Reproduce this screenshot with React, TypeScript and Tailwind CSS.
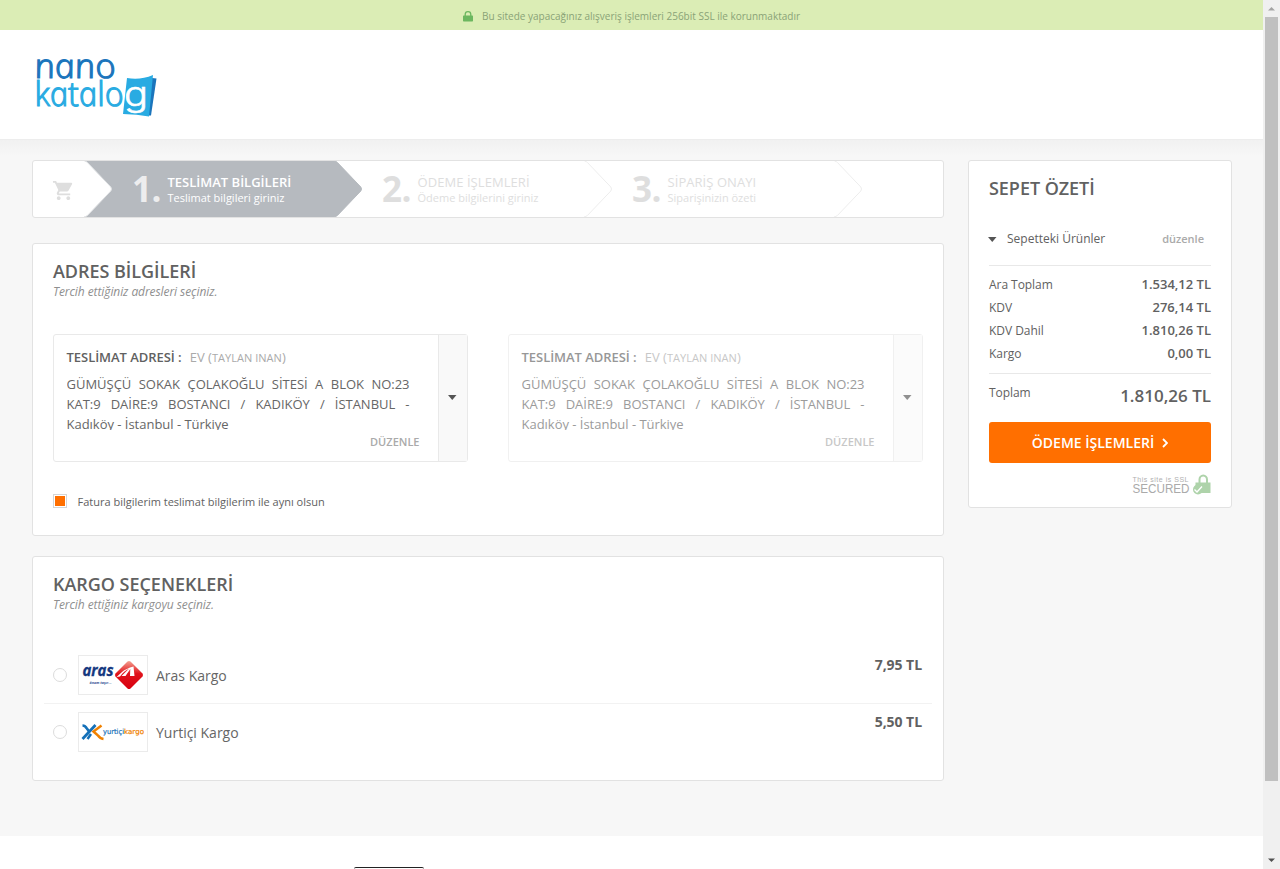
import React from "react";

function Chevron({ fill, stroke, back }: { fill: string; stroke: string; back: string }) {
  return (
    <svg width="28" height="56" viewBox="0 0 28 56" className="shrink-0">
      <rect width="28" height="56" fill={back} />
      <path d="M0 0H0.500Q2.500 0.400 3.500 1.600L26.800 26Q28.200 28 26.800 30L3.500 54.400Q2 55.600 0 56H0Z" fill={fill} />
      <path d="M0.500 0Q2.500 0.400 3.500 1.600L26.800 26Q28.200 28 26.800 30L3.500 54.400Q2 55.600 0 56" fill="none" stroke={stroke} />
    </svg>
  );
}

function Step({ no, title, text, active }: { no: string; title: string; text: string; active?: boolean }) {
  return (
    <div className={"flex h-[56px] w-[222px] shrink-0 whitespace-nowrap pl-5 " + (active ? "bg-[#b6babf] text-white" : "bg-white text-[#dedede]")}>
      <div className={"w-[35px] text-[35px] font-bold leading-[55px] tracking-[-0.5px] " + (active ? "text-[#ededee]" : "")}>{no}</div>
      <div className="pl-[0.5px] pt-[12px]">
        <div className={"text-[13px] leading-[18px] " + (active ? "font-semibold" : "tracking-[0.06px]")}>{title}</div>
        <div className="text-[11px] leading-[13px]">{text}</div>
      </div>
    </div>
  );
}

function SectionTitle({ title, sub }: { title: string; sub: string }) {
  return (
    <div className="whitespace-nowrap">
      <h2 className="text-[18px] font-semibold leading-[20px] tracking-[-0.03px] text-[#616161]">{title}</h2>
      <p className="mt-[2px] text-[12px] italic leading-[18px] tracking-[-0.08px] text-[#8f8f8f]">{sub}</p>
    </div>
  );
}

function Caret() {
  return (
    <svg width="9" height="5" viewBox="0 0 9 5" className="shrink-0">
      <path d="M0 0H8.500L4.250 5Z" fill="#555" />
    </svg>
  );
}

function AddressCard({ faded }: { faded?: boolean }) {
  return (
    <div className={"flex h-[128px] w-[415px] rounded-[3px] border border-[#e9e9e9] " + (faded ? "opacity-65" : "")}>
      <div className="flex flex-1 flex-col pl-[12.5px] pt-[12px]">
        <div className="whitespace-nowrap text-[13px] leading-5 tracking-[-0.04px]">
          <span className="font-semibold text-[#616161]">TESLİMAT ADRESİ :</span>
          <span className="ml-2 tracking-[0.03px] text-[#aaa]">EV (<span className="text-[11px]">TAYLAN INAN</span>)</span>
        </div>
        <div className="mt-[6px] h-[56px] w-[343px] overflow-hidden text-justify text-[13px] leading-5 tracking-[-0.02px] text-[#666]">
          GÜMÜŞÇÜ SOKAK ÇOLAKOĞLU SİTESİ A BLOK NO:23 KAT:9 DAİRE:9 BOSTANCI / KADIKÖY / İSTANBUL - Kadıköy - İstanbul - Türkiye
        </div>
        <div className="mt-[4px] pr-[18.5px] text-right text-[11px] font-semibold leading-[16px] text-[#aaa]">DÜZENLE</div>
      </div>
      <div className="flex w-[29px] items-center justify-center border-l border-[#e9e9e9] bg-[#f9f9f9] pb-[2px] pr-px">
        <Caret />
      </div>
    </div>
  );
}

function ArasLogo() {
  return (
    <svg width="68" height="38" viewBox="0 0 68 38" className="[font-family:'Open_Sans',sans-serif]">
      <defs>
        <linearGradient id="aras" x1="0" y1="0" x2="0" y2="1">
          <stop offset="0" stopColor="#f4a090" />
          <stop offset="0.450" stopColor="#e0141c" />
          <stop offset="1" stopColor="#d8000f" />
        </linearGradient>
      </defs>
      <text x="3.500" y="20" fontSize="15.500" fontWeight="bold" fontStyle="italic" fill="#15387f" stroke="#15387f" strokeWidth="0.300" textLength="31" lengthAdjust="spacingAndGlyphs">aras</text>
      <text x="10.500" y="27.500" fontSize="4.200" fontWeight="bold" fontStyle="italic" fill="#3c5a98" textLength="22" lengthAdjust="spacingAndGlyphs">önem taşır...</text>
      <path d="M48.500 5.500Q50 4.500 51.500 5.500L63.500 17.500Q64.500 19 63.500 20.500L51.500 32.500Q50 33.500 48.500 32.500L36.500 20.500Q35.500 19 36.500 17.500Z" fill="url(#aras)" />
      <path d="M37.500 21L43 16Q47 12.500 54.500 10.500L55.500 20H51L51.300 13L46.500 20H42.500L50 12.800Q45 15 41 20.500Z" fill="#fff" />
    </svg>
  );
}

function YurticiLogo() {
  return (
    <svg width="68" height="38" viewBox="0 0 68 38" className="[font-family:'DejaVu_Sans',sans-serif]">
      <path d="M3.500 12.500Q6 12.500 7.500 15L10.500 19" fill="none" stroke="#1470b8" strokeWidth="2.600" />
      <path d="M3.500 26L16.500 12" stroke="#1470b8" strokeWidth="2.800" />
      <path d="M8.500 26L12 21" stroke="#1470b8" strokeWidth="2.500" />
      <path d="M22.500 12.500L14.500 18.500L19 22.500Q21 25.500 24.500 26" fill="none" stroke="#f08100" strokeWidth="2.500" />
      <g strokeWidth="0.200">
        <text x="24" y="20.500" fontSize="7" fill="#1470b8" stroke="#1470b8" textLength="21" lengthAdjust="spacingAndGlyphs">yurtiçi</text>
        <text x="45" y="20.500" fontSize="7" fill="#f08100" stroke="#f08100" textLength="20" lengthAdjust="spacingAndGlyphs">kargo</text>
      </g>
    </svg>
  );
}

function CargoRow({ logo, name, price }: { logo: React.ReactNode; name: string; price: string }) {
  return (
    <div className="box-content flex h-[56px] items-center">
      <span className="ml-[9px] h-[14px] w-[14px] rounded-full border border-[#dcdcdc] bg-white" />
      <span className="ml-[11px] flex h-10 w-[70px] border border-[#ebebeb]">{logo}</span>
      <span className="ml-[8px] pt-[2px] text-[14px] leading-5 text-[#666]">{name}</span>
      <span className="ml-auto mr-[10px] pb-[20px] text-[14px] font-bold leading-4 tracking-[-0.05px] text-[#616161]">{price}</span>
    </div>
  );
}

function SumRow({ label, value }: { label: string; value: string }) {
  return (
    <div className="flex h-[23px] justify-between">
      <span className="text-[12px] leading-[24px] tracking-[-0.05px]">{label}</span>
      <span className="text-[13px] font-semibold leading-[23px]">{value}</span>
    </div>
  );
}

function NanoLogo() {
  return (
    <svg width="126" height="76" viewBox="0 0 126 76" className="overflow-visible [font-family:'Open_Sans',sans-serif]">
      <path d="M119 28L123.500 28.500L118 65.500L113 65.500Z" fill="#1b75bc" />
      <path d="M94 28Q107 30.500 120 25L116 66.500Q104 64 90 64Z" fill="#29abe2" />
      <g fontSize="34" fontStyle="italic" fontWeight="300" strokeWidth="1.100">
        <text transform="translate(3.500 27.500) skewX(12)" fill="#1b75bc" stroke="#1b75bc" textLength="81" lengthAdjust="spacingAndGlyphs">nano</text>
        <text transform="translate(3.500 55.500) skewX(12)" fill="#29abe2" stroke="#29abe2" textLength="89" lengthAdjust="spacingAndGlyphs">katalo</text>
      </g>
      <text x="91" y="55.500" fontSize="34" fontWeight="300" fill="#fff" stroke="#fff" strokeWidth="0.600" textLength="24" lengthAdjust="spacingAndGlyphs" className="[font-family:Inter,sans-serif]">g</text>
    </svg>
  );
}

export default function App() {
  return (
    <div className="flex h-[869px] w-[1280px] overflow-hidden bg-white [font-family:'Open_Sans','Liberation_Sans',sans-serif]">
      <div className="flex w-[1263px] flex-col">
        <div className="flex h-[30px] shrink-0 items-center justify-center bg-[#dbedb5] text-[#8aa377]">
          <svg width="10" height="11" viewBox="0 0 10 11" className="mr-[9px] mt-[2px]">
            <path d="M2.200 5V3.500A2.800 2.800 0 0 1 7.800 3.500V5" fill="none" stroke="#6cb75f" strokeWidth="1.300" />
            <rect y="4.500" width="10" height="6" rx="0.700" fill="#6cb75f" />
          </svg>
          <span className="mt-[2px] whitespace-nowrap text-[10px] leading-4">Bu sitede yapacağınız alışveriş işlemleri 256bit SSL ile korunmaktadır</span>
        </div>
        <header className="h-[109px] shrink-0 bg-white pl-[33px] pt-[20px]">
          <NanoLogo />
        </header>
        <main className="flex h-[697px] shrink-0 items-start gap-6 border-t border-[#ededed] bg-[#f7f7f7] bg-[linear-gradient(#f1f1f1,#f7f7f7_16px)] pl-8 pt-[20px]">
          <div className="w-[912px]">
            <div className="flex h-[58px] overflow-hidden rounded-[3px] border border-[#e2e2e2] bg-white">
              <div className="flex w-[51px] shrink-0 items-center pl-[19px]">
                <svg width="23" height="23" viewBox="0 0 24 24" className="mt-[2px] shrink-0" fill="#dedede">
                  <path d="M7 18c-1.100 0-1.990.9-1.990 2S5.900 22 7 22s2-.9 2-2-.9-2-2-2zM1 2v2h2l3.600 7.590-1.350 2.450c-.16.280-.25.610-.25.960 0 1.100.9 2 2 2h12v-2H7.420c-.14 0-.25-.11-.25-.25l.03-.12.9-1.630h7.450c.75 0 1.410-.41 1.750-1.030l3.580-6.490A1 1 0 0 0 20 4H5.210l-.94-2H1zm16 16c-1.100 0-1.990.9-1.990 2s.89 2 1.990 2 2-.9 2-2-.9-2-2-2z" />
                </svg>
              </div>
              <Chevron fill="#fff" stroke="#dfe1e3" back="#b6babf" />
              <Step no="1." title="TESLİMAT BİLGİLERİ" text="Teslimat bilgileri giriniz" active />
              <Chevron fill="#b6babf" stroke="#b6babf" back="#fff" />
              <Step no="2." title="ÖDEME İŞLEMLERİ" text="Ödeme bilgilerini giriniz" />
              <Chevron fill="#fff" stroke="#ededed" back="#fff" />
              <Step no="3." title="SİPARİŞ ONAYI" text="Siparişinizin özeti" />
              <Chevron fill="#fff" stroke="#ededed" back="#fff" />
            </div>

            <section className="mt-[25px] h-[293px] rounded-[3px] border border-[#e2e2e2] bg-white pl-5 pt-[17px]">
              <SectionTitle title="ADRES BİLGİLERİ" sub="Tercih ettiğiniz adresleri seçiniz." />
              <div className="mt-[33px] flex gap-10">
                <AddressCard />
                <AddressCard faded />
              </div>
              <div className="mt-[32px] flex items-start">
                <span className="flex h-[14px] w-[14px] items-center justify-center border border-[#d6d6d6]">
                  <span className="h-[10px] w-[10px] bg-[#ff6f00]" />
                </span>
                <span className="ml-[10.5px] whitespace-nowrap text-[11px] leading-4 text-[#616161]">Fatura bilgilerim teslimat bilgilerim ile aynı olsun</span>
              </div>
            </section>

            <section className="mt-[20px] h-[225px] rounded-[3px] border border-[#e2e2e2] bg-white pt-[17px]">
              <div className="pl-5">
                <SectionTitle title="KARGO SEÇENEKLERİ" sub="Tercih ettiğiniz kargoyu seçiniz." />
              </div>
              <div className="mx-[11px] mt-[33px] divide-y divide-[#f2f2f2]">
                <CargoRow logo={<ArasLogo />} name="Aras Kargo" price="7,95 TL" />
                <CargoRow logo={<YurticiLogo />} name="Yurtiçi Kargo" price="5,50 TL" />
              </div>
            </section>
          </div>

          <aside className="h-[348px] w-[264px] rounded-[3px] border border-[#e2e2e2] bg-white px-5 pt-[16px] text-[#616161]">
            <h2 className="text-[18px] font-semibold leading-[22px] tracking-[-0.04px]">SEPET ÖZETİ</h2>
            <div className="-ml-px mt-[30px] flex h-5 items-center pr-[7px]">
              <Caret />
              <span className="ml-[10px] text-[12px] leading-5">Sepetteki Ürünler</span>
              <span className="ml-auto text-[11px] font-semibold leading-5 text-[#aaa]">düzenle</span>
            </div>
            <div className="mt-[16px] border-y border-[#e8e8e8] pb-[8px] pt-[7px]">
              <SumRow label="Ara Toplam" value="1.534,12 TL" />
              <SumRow label="KDV" value="276,14 TL" />
              <SumRow label="KDV Dahil" value="1.810,26 TL" />
              <SumRow label="Kargo" value="0,00 TL" />
            </div>
            <div className="flex h-[48px] justify-between">
              <span className="mt-[9px] text-[12px] leading-5 tracking-[-0.05px]">Toplam</span>
              <span className="mt-[12px] text-[17px] font-semibold leading-5">1.810,26 TL</span>
            </div>
            <button className="flex h-[41px] w-full items-center justify-center gap-2 rounded-[3px] bg-[#ff6f00] text-[14px] font-semibold text-white">
              ÖDEME İŞLEMLERİ
              <svg width="6" height="10" viewBox="0 0 6 10">
                <path d="M1 1L5 5L1 9" fill="none" stroke="#fff" strokeWidth="1.800" />
              </svg>
            </button>
            <div className="mt-[11px] flex justify-end">
              <svg width="80" height="22" viewBox="0 0 80 22" className="[font-family:'Liberation_Sans',sans-serif]">
                <text x="1.500" y="8" fontSize="7" fill="#b0b0b0" textLength="56" lengthAdjust="spacing">This site is SSL</text>
                <text x="1.500" y="19" fontSize="12" fill="#aaa" textLength="57" lengthAdjust="spacingAndGlyphs">SECURED</text>
                <path d="M68.500 10V5.500A3.700 4 0 0 1 76 5.500V10" fill="none" stroke="#aed3aa" strokeWidth="2" />
                <rect x="64.500" y="8.500" width="15" height="10.500" fill="#aed3aa" />
                <circle cx="67" cy="15.500" r="5" fill="#aed3aa" />
                <path d="M63.500 15.500L66 18L71 12.500" fill="none" stroke="#fff" strokeWidth="1.400" />
              </svg>
            </div>
          </aside>
        </main>
        <footer className="flex flex-1 items-end bg-white pl-[354px]">
          <div className="h-[2px] w-[70px] rounded-t-[2px] border-t border-[#222]" />
        </footer>
      </div>

      <div className="flex w-[17px] flex-col items-center bg-[#f0f0f0]">
        <svg width="17" height="17" viewBox="0 0 17 17" className="shrink-0">
          <path d="M5 10.500L8.500 7L12 10.500Z" fill="#a3a3a3" />
        </svg>
        <div className="h-[764px] w-[13px] bg-[#c0c0c0]" />
        <svg width="17" height="17" viewBox="0 0 17 17" className="mt-auto shrink-0">
          <path d="M5 6.500H12L8.500 10Z" fill="#505050" />
        </svg>
      </div>
    </div>
  );
}
